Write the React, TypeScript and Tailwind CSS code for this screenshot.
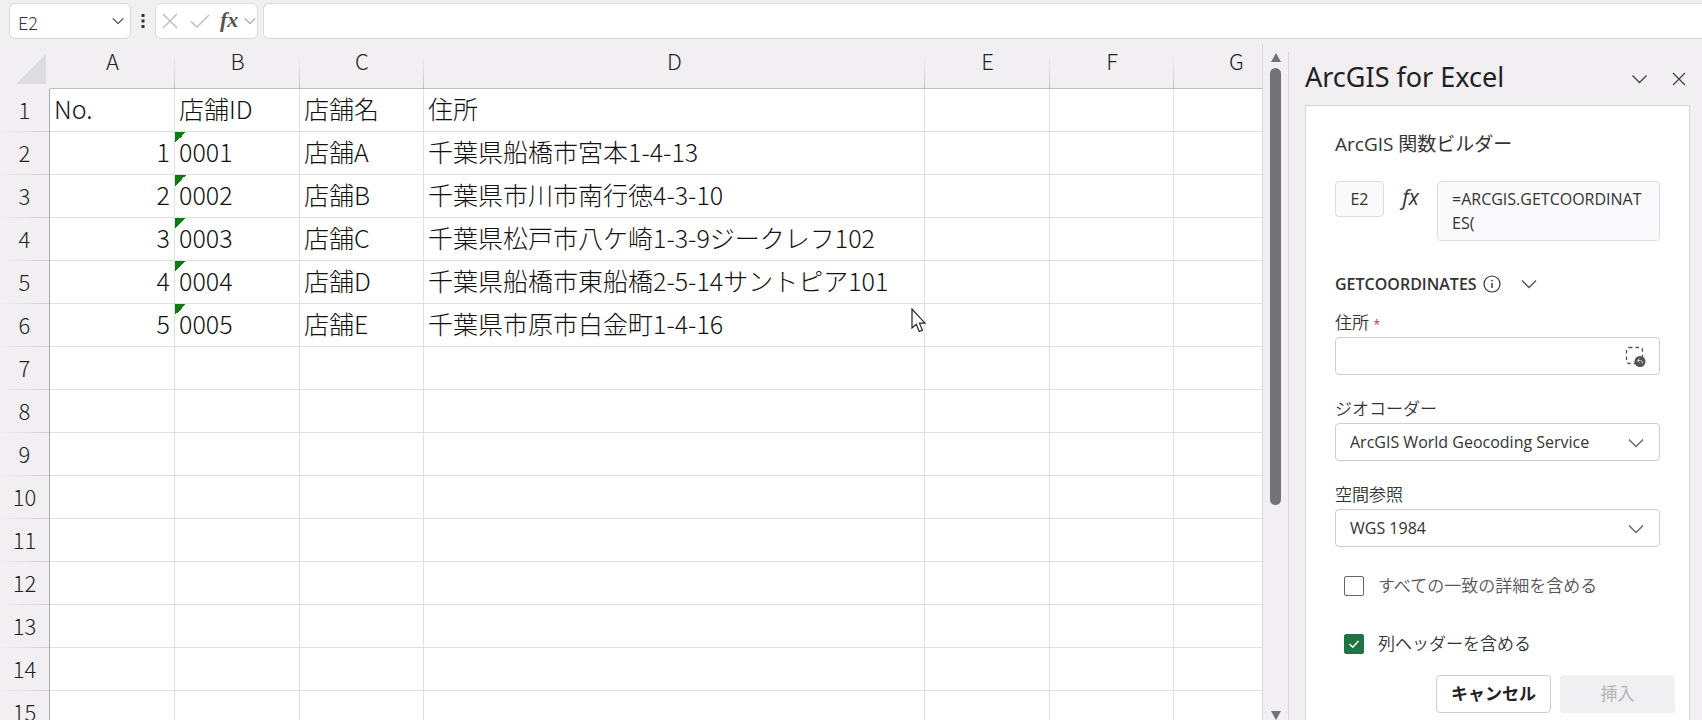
import { useState } from "react";
import clsx from "clsx";

type Store = {
  no: number;
  id: string;
  name: string;
  address: string;
};

const stores: Store[] = [
  { no: 1, id: "0001", name: "店舗A", address: "千葉県船橋市宮本1-4-13" },
  { no: 2, id: "0002", name: "店舗B", address: "千葉県市川市南行徳4-3-10" },
  { no: 3, id: "0003", name: "店舗C", address: "千葉県松戸市八ケ崎1-3-9ジークレフ102" },
  { no: 4, id: "0004", name: "店舗D", address: "千葉県船橋市東船橋2-5-14サントピア101" },
  { no: 5, id: "0005", name: "店舗E", address: "千葉県市原市白金町1-4-16" },
];

const columns = ["A", "B", "C", "D", "E", "F", "G"];
const emptyRows = [7, 8, 9, 10, 11, 12, 13, 14, 15];

const cell = "h-[43px] border-r border-b border-[#e0dfe2] px-1 pb-1 text-[25px] leading-8 whitespace-nowrap";

function Chevron({ className }: { className?: string }) {
  return (
    <svg viewBox="0 0 16 10" fill="none" stroke="currentColor" strokeWidth="1.4" className={className} aria-hidden="true">
      <path d="M1 1.5 8 8.5 15 1.5" />
    </svg>
  );
}

function FormulaBar() {
  return (
    <div className="flex h-11 shrink-0 items-start pt-[3px] pl-[9px]">
      <div className="flex h-9 w-[122px] items-center rounded-md border border-[#d9d8db] bg-white pr-[6px] pl-2">
        <input
          aria-label="名前ボックス"
          defaultValue="E2"
          className="w-full min-w-0 bg-transparent pt-[2px] text-lg font-light text-[#333] outline-none"
        />
        <button aria-label="名前の一覧" className="text-[#333]">
          <Chevron className="h-2 w-3" />
        </button>
      </div>
      <svg viewBox="0 0 4 16" className="mx-[10px] mt-[10px] h-4 w-1 fill-[#333]" aria-hidden="true">
        <rect x="0.5" y="1" width="3" height="3" />
        <rect x="0.5" y="6.5" width="3" height="3" />
        <rect x="0.5" y="12" width="3" height="3" />
      </svg>
      <div className="flex h-9 w-[103px] items-center rounded-md border border-[#d9d8db] bg-white pl-[6px]">
        <button aria-label="キャンセル" className="text-[#bbb]">
          <svg viewBox="0 0 16 16" fill="none" stroke="currentColor" strokeWidth="1.3" className="h-4 w-4">
            <path d="M1 1 15 15M15 1 1 15" />
          </svg>
        </button>
        <button aria-label="入力" className="ml-3 text-[#bbb]">
          <svg viewBox="0 0 20 14" fill="none" stroke="currentColor" strokeWidth="1.4" className="h-[14px] w-5">
            <path d="M1 7.5 7 13 19 1" />
          </svg>
        </button>
        <button
          aria-label="関数の挿入"
          className="ml-[10px] w-[18px] pb-[2px] text-[22px] leading-6 font-bold text-[#555] italic [font-family:'Liberation_Serif',serif]"
        >
          fx
        </button>
        <button aria-label="関数の一覧" className="ml-[6px] text-[#999]">
          <Chevron className="h-2 w-3" />
        </button>
      </div>
      <input
        aria-label="数式バー"
        className="ml-[5px] h-9 min-w-0 flex-1 rounded-l-md border border-r-0 border-[#d9d8db] bg-white px-3 outline-none"
      />
    </div>
  );
}

function RowHead({ row }: { row: number }) {
  return (
    <th
      scope="row"
      className="h-[43px] border-r border-[#a9a8ab] bg-linear-to-l from-[#cfced1] to-transparent bg-size-[100%_1px] bg-bottom bg-no-repeat p-0 pb-[3px] text-center text-[22px] leading-8 font-light text-[#222]"
    >
      {row}
    </th>
  );
}

function Sheet() {
  return (
    <main className="relative min-w-0 flex-1 overflow-hidden">
      <table className="w-[1299px] table-fixed border-separate border-spacing-0 text-[#111]">
        <colgroup>
          <col className="w-[50px]" />
          <col className="w-[125px]" />
          <col className="w-[125px]" />
          <col className="w-[124px]" />
          <col className="w-[501px]" />
          <col className="w-[125px]" />
          <col className="w-[124px]" />
          <col className="w-[125px]" />
        </colgroup>
        <thead>
          <tr>
            <td className="h-[45px] p-0 pt-[10px] pl-4 align-top">
              <svg viewBox="0 0 30 30" className="h-[30px] w-[30px] fill-[#dddcdf]" aria-hidden="true">
                <path d="M30 0V30H0Z" />
              </svg>
            </td>
            {columns.map((col) => (
              <th
                key={col}
                scope="col"
                className="h-[45px] border-b border-[#bdbcbf] bg-linear-to-t from-[#c4c3c6] to-transparent bg-size-[1px_75%] bg-right-bottom bg-no-repeat p-0 align-top text-[22px] leading-8 font-light text-[#222]"
              >
                {col}
              </th>
            ))}
          </tr>
        </thead>
        <tbody className="bg-white font-light [&_th]:bg-[#f1eff2]">
          <tr>
            <RowHead row={1} />
            <td className={cell}>No.</td>
            <td className={cell}>店舗ID</td>
            <td className={cell}>店舗名</td>
            <td className={cell}>住所</td>
            <td className={cell} />
            <td className={cell} />
            <td className={cell} />
          </tr>
          {stores.map((store) => (
            <tr key={store.id}>
              <RowHead row={store.no + 1} />
              <td className={clsx(cell, "text-right")}>{store.no}</td>
              {/* green corner: number stored as text */}
              <td className={clsx(cell, "bg-[linear-gradient(135deg,#0f7b0f_50%,transparent_50%)] bg-size-[11px_11px] bg-no-repeat")}>
                {store.id}
              </td>
              <td className={cell}>{store.name}</td>
              <td className={cell}>{store.address}</td>
              <td className={cell} />
              <td className={cell} />
              <td className={cell} />
            </tr>
          ))}
          {emptyRows.map((row) => (
            <tr key={row}>
              <RowHead row={row} />
              {columns.map((col) => (
                <td key={col} className={cell} />
              ))}
            </tr>
          ))}
        </tbody>
      </table>
      <svg viewBox="0 0 15 25" className="absolute top-[264px] left-[911px] h-[25px] w-[15px]" aria-hidden="true">
        <path d="M1 1V20L5.3 16.2 8.2 23.5 11.4 22.1 8.4 15.2H14Z" fill="#fff" stroke="#222" strokeWidth="1.2" />
      </svg>
    </main>
  );
}

function ScrollTrack() {
  return (
    <div className="flex w-[26px] shrink-0 flex-col items-center border-l border-[#d9d8db] pt-[9px]">
      <svg viewBox="0 0 10 9" className="h-[9px] w-[10px] fill-[#737275]" aria-hidden="true">
        <path d="M5 0 10 9H0Z" />
      </svg>
      <div className="mt-[6px] h-[65.5%] w-[11px] rounded-full bg-[#737275]" />
      <svg viewBox="0 0 10 9" className="mt-auto h-[9px] w-[10px] fill-[#737275]" aria-hidden="true">
        <path d="M0 0H10L5 9Z" />
      </svg>
    </div>
  );
}

function SelectField({ id, label, options }: { id: string; label: string; options: string[] }) {
  return (
    <div className="mt-5">
      <label htmlFor={id} className="block h-7 text-[17px] leading-7 [font-weight:350]">
        {label}
      </label>
      <div className="relative">
        <select
          id={id}
          className="h-[38px] w-full appearance-none rounded border border-[#cfced1] bg-white px-[14px] text-base outline-none"
        >
          {options.map((option) => (
            <option key={option}>{option}</option>
          ))}
        </select>
        <Chevron className="pointer-events-none absolute top-[15px] right-4 h-[10px] w-4 text-[#666]" />
      </div>
    </div>
  );
}

function TaskPane() {
  const [allMatches, setAllMatches] = useState(false);
  const [headers, setHeaders] = useState(true);

  return (
    <aside className="mt-2 flex w-[414px] shrink-0 flex-col border-l border-[#d5d4d7] pr-3 pl-4 text-[#333] [font-family:'Open_Sans','Noto_Sans_CJK_JP',sans-serif]">
      <div className="flex h-[53px] shrink-0 items-center pr-1">
        <h1 className="flex-1 pb-1 text-[27px] leading-8 text-[#222] [font-family:'Noto_Sans',sans-serif]">ArcGIS for Excel</h1>
        <button aria-label="作業ウィンドウのオプション" className="text-[#444]">
          <Chevron className="h-[10px] w-[17px]" />
        </button>
        <button aria-label="閉じる" className="ml-6 text-[#444]">
          <svg viewBox="0 0 14 14" fill="none" stroke="currentColor" strokeWidth="1.3" className="h-[14px] w-[14px]">
            <path d="M1 1 13 13M13 1 1 13" />
          </svg>
        </button>
      </div>

      <div className="flex flex-1 flex-col border border-b-0 border-[#d5d4d7] bg-white">
        <div className="px-[29px] pt-6">
          <h2 className="text-[19px] leading-7">ArcGIS 関数ビルダー</h2>

          <div className="mt-[23px] flex items-start">
            <div className="flex h-9 w-[49px] items-center justify-center rounded border border-[#dddce2] bg-[#faf9fc] text-base">
              E2
            </div>
            <span className="w-[53px] text-center text-[21px] leading-8 italic">fx</span>
            <output className="min-h-[60px] flex-1 rounded border border-[#dddce2] bg-[#faf9fc] px-[14px] py-[5px] text-base leading-6 break-all">
              =ARCGIS.GETCOORDINATES(
            </output>
          </div>

          <div className="mt-[29px] flex h-7 items-center">
            <h3 className="text-base font-semibold">GETCOORDINATES</h3>
            <svg viewBox="0 0 18 18" fill="none" stroke="currentColor" className="ml-[6px] h-[18px] w-[18px]" aria-hidden="true">
              <circle cx="9" cy="9" r="8" strokeWidth="1.2" />
              <path d="M9 8V13" strokeWidth="1.4" />
              <circle cx="9" cy="5.6" r="0.9" fill="currentColor" stroke="none" />
            </svg>
            <button aria-label="関数の選択" className="ml-5 text-[#555]">
              <Chevron className="h-[10px] w-4" />
            </button>
          </div>

          <label htmlFor="address" className="mt-[11px] block h-7 text-[17px] leading-7 [font-weight:350]">
            住所 <span className="text-xs font-normal text-[#c4314b]">*</span>
          </label>
          <div className="flex h-[38px] items-center rounded border border-[#cfced1] bg-white pr-[13px]">
            <input id="address" className="h-full min-w-0 flex-1 bg-transparent px-[14px] outline-none" />
            <button aria-label="セル範囲の選択" className="text-[#555]">
              <svg viewBox="0 0 21 21" fill="none" className="h-[21px] w-[21px]">
                <rect x="1.5" y="1.5" width="16" height="16" rx="2.5" stroke="currentColor" strokeWidth="1.3" strokeDasharray="3.5 3" />
                <circle cx="15" cy="15.5" r="5.5" fill="currentColor" />
                <path d="M12.5 14.5H15.5Q17.5 14.5 17.5 17.5M14.5 12.5 12.5 14.5 14.5 16.5" stroke="#ccc" strokeWidth="1" />
              </svg>
            </button>
          </div>

          <SelectField id="geocoder" label="ジオコーダー" options={["ArcGIS World Geocoding Service"]} />
          <SelectField id="spatial-reference" label="空間参照" options={["WGS 1984"]} />

          <label className="mt-[25px] flex h-7 items-center gap-[14px] pl-[9px] text-[17px] text-[#555] [font-weight:350]">
            <input
              type="checkbox"
              checked={allMatches}
              onChange={(e) => setAllMatches(e.target.checked)}
              className="h-5 w-5 appearance-none rounded-xs border border-[#666] bg-white checked:border-[#217346] checked:bg-[#217346]"
            />
            すべての一致の詳細を含める
          </label>
          <label className="mt-[30px] flex h-7 items-center gap-[14px] pl-[9px] text-[17px] [font-weight:350]">
            <span className="grid">
              <input
                type="checkbox"
                checked={headers}
                onChange={(e) => setHeaders(e.target.checked)}
                className="col-start-1 row-start-1 h-5 w-5 appearance-none rounded-xs border border-[#666] bg-white checked:border-[#217346] checked:bg-[#217346]"
              />
              {headers && (
                <svg
                  viewBox="0 0 20 20"
                  fill="none"
                  stroke="#fff"
                  strokeWidth="1.6"
                  className="pointer-events-none col-start-1 row-start-1 h-5 w-5"
                  aria-hidden="true"
                >
                  <path d="M5.5 10 8.8 13.2 14.5 7" />
                </svg>
              )}
            </span>
            列ヘッダーを含める
          </label>
        </div>

        <div className="mt-[17px] flex justify-end gap-[9px] pr-[14px]">
          <button className="h-[38px] w-[115px] rounded border border-[#cfced1] bg-white text-[17px] font-semibold text-[#222]">
            キャンセル
          </button>
          <button disabled className="h-[38px] w-[115px] rounded bg-[#f0eff1] text-[17px] text-[#b5b4b7]">
            挿入
          </button>
        </div>
      </div>
    </aside>
  );
}

export default function App() {
  return (
    <div className="flex h-screen flex-col overflow-hidden bg-[#f1eff2] [font-family:'Noto_Sans_CJK_JP',sans-serif]">
      <FormulaBar />
      <div className="flex min-h-0 flex-1">
        <Sheet />
        <ScrollTrack />
        <TaskPane />
      </div>
    </div>
  );
}
